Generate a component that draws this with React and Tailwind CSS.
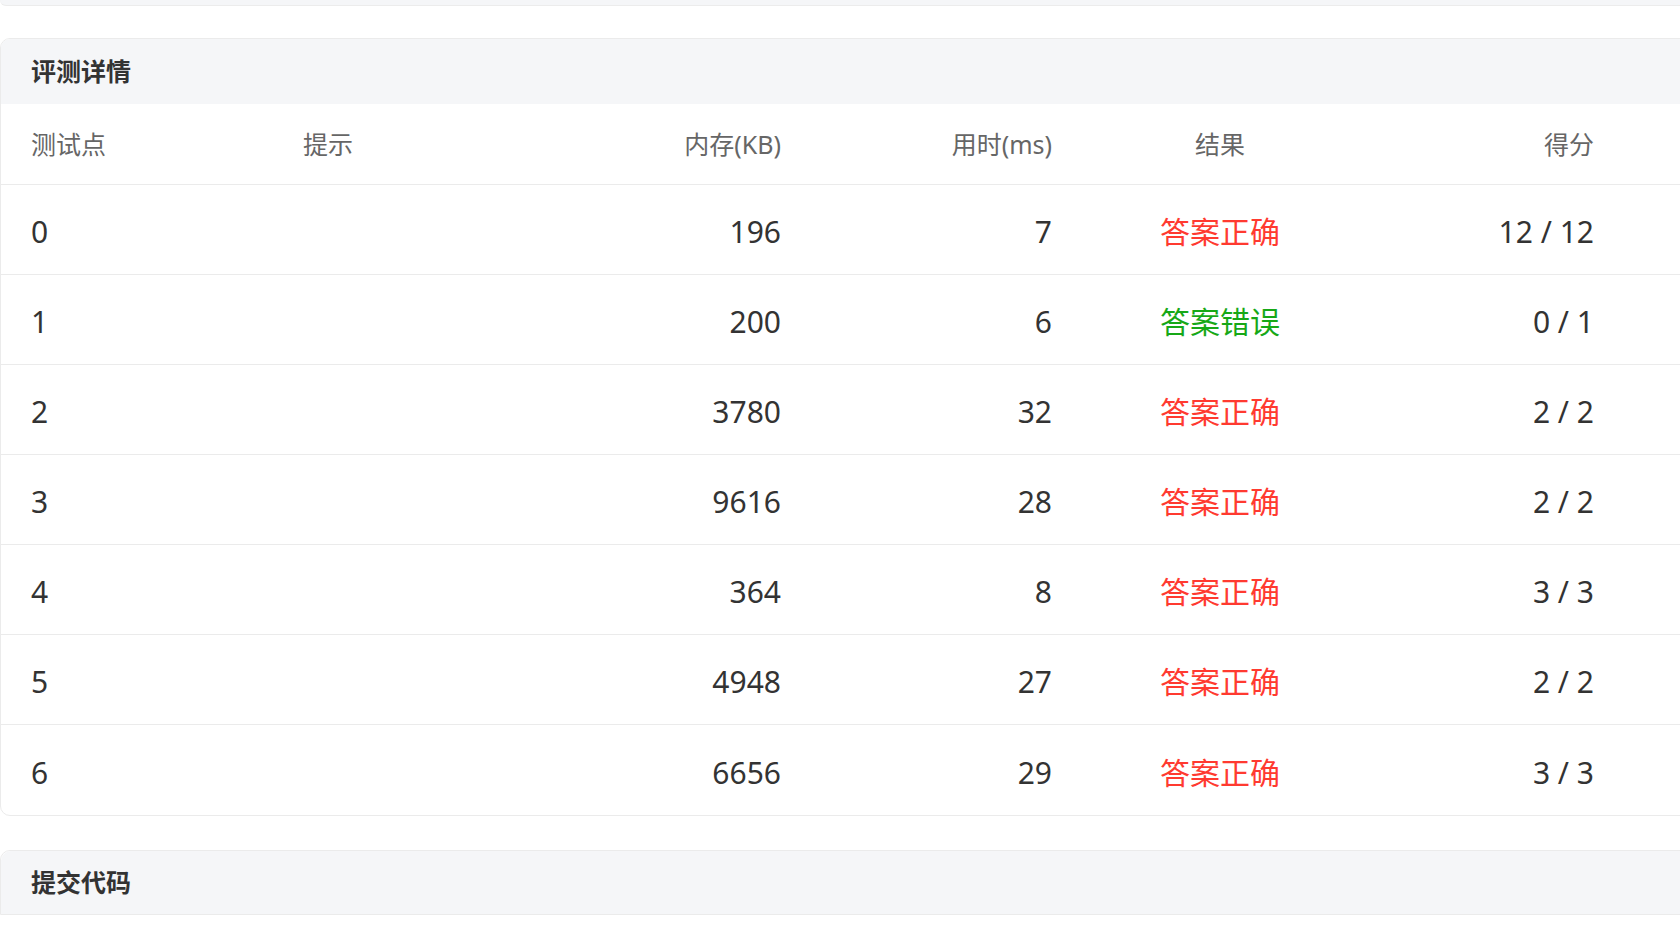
const rows = [
  { id: 0, mem: 196, time: 7, ok: true, score: "12 / 12" },
  { id: 1, mem: 200, time: 6, ok: false, score: "0 / 1" },
  { id: 2, mem: 3780, time: 32, ok: true, score: "2 / 2" },
  { id: 3, mem: 9616, time: 28, ok: true, score: "2 / 2" },
  { id: 4, mem: 364, time: 8, ok: true, score: "3 / 3" },
  { id: 5, mem: 4948, time: 27, ok: true, score: "2 / 2" },
  { id: 6, mem: 6656, time: 29, ok: true, score: "3 / 3" },
];

const cols = "grid grid-cols-[272px_269px_269px_271px_276px_266px]";

export default function App() {
  return (
    <div
      className="w-[1680px] h-[929px] overflow-hidden bg-white"
      style={{ fontFamily: '"Noto Sans", "Noto Sans CJK SC", sans-serif' }}
    >
      {/* previous card, only its bottom edge is on screen */}
      <div className="w-[1720px] h-[6px] bg-[#f5f6f8] border-b border-[#ececec] rounded-b-[10px]" />

      <div className="mt-[32px] w-[1720px] rounded-[10px] border border-[#ebebeb] overflow-hidden">
        <div className="h-[65px] bg-[#f5f6f8] flex items-center px-[30px]">
          <span className="text-[25px] font-semibold text-[#333]">评测详情</span>
        </div>
        <div className={`${cols} h-[81px] pt-[2px] items-center border-b border-[#ebebeb] text-[25px] text-[#666]`}>
          <div className="px-[30px]">测试点</div>
          <div className="px-[30px]">提示</div>
          <div className="px-[30px] text-right">内存(KB)</div>
          <div className="px-[30px] text-right">用时(ms)</div>
          <div className="text-center">结果</div>
          <div className="px-[30px] text-right">得分</div>
        </div>
        {rows.map((r, i) => (
          <div
            key={r.id}
            className={`${cols} h-[90px] pt-[4px] items-center text-[30px] text-[#333] ${i < rows.length - 1 ? "border-b border-[#ebebeb]" : ""}`}
          >
            <div className="px-[30px]">{r.id}</div>
            <div className="px-[30px]" />
            <div className="px-[30px] text-right">{r.mem}</div>
            <div className="px-[30px] text-right">{r.time}</div>
            <div className={`text-center ${r.ok ? "text-[#ff3a30]" : "text-[#17a817]"}`}>
              {r.ok ? "答案正确" : "答案错误"}
            </div>
            <div className="px-[30px] text-right">{r.score}</div>
          </div>
        ))}
      </div>

      <div className="mt-[34px] w-[1720px] rounded-t-[10px] border border-[#ebebeb]">
        <div className="h-[63px] bg-[#f5f6f8] flex items-center px-[30px] rounded-t-[10px]">
          <span className="text-[25px] font-semibold text-[#333]">提交代码</span>
        </div>
      </div>
    </div>
  );
}
